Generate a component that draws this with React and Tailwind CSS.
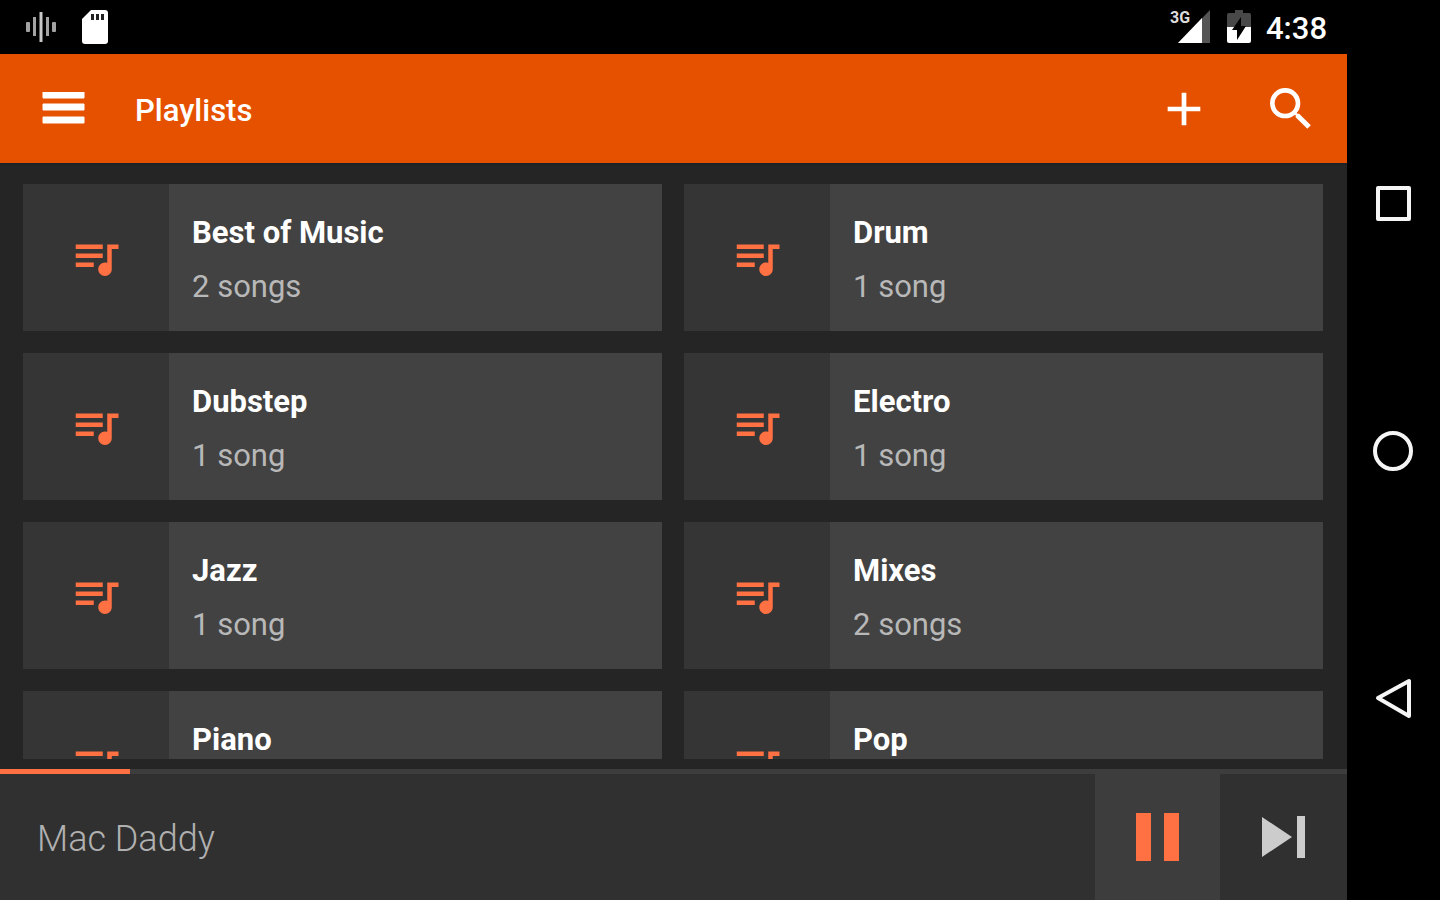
import { useState } from 'react';
import { MdAdd, MdQueueMusic, MdSearch } from 'react-icons/md';

const playlists = [
  { name: 'Best of Music', songs: 2 },
  { name: 'Drum', songs: 1 },
  { name: 'Dubstep', songs: 1 },
  { name: 'Electro', songs: 1 },
  { name: 'Jazz', songs: 1 },
  { name: 'Mixes', songs: 2 },
  { name: 'Piano', songs: 1 },
  { name: 'Pop', songs: 1 },
];

function StatusBar() {
  return (
    <div className="flex h-[54px] shrink-0 items-center bg-black pl-[26px] pr-5 text-white">
      <svg width="30" height="32" viewBox="0 0 30 32" aria-hidden="true">
        <g fill="#a3a3a3">
          <rect x="0" y="11" width="4" height="10" rx="1"/>
          <rect x="7" y="6" width="3" height="19"/>
          <rect x="20" y="6" width="3" height="19"/>
          <rect x="26" y="11" width="4" height="10" rx="1"/>
        </g>
        <rect x="13.500" y="1" width="3" height="30" fill="#c8c8c8"/>
      </svg>
      <svg className="ml-[26px]" width="26" height="34" viewBox="0 0 26 34" aria-hidden="true">
        <path d="M9 0h14a3 3 0 0 1 3 3v28a3 3 0 0 1-3 3H3a3 3 0 0 1-3-3V9z" fill="#fff"/>
        <path d="M9 4h3v6H9zM14 4h3v6h-3zM19 4h3v6h-3z" fill="#222"/>
      </svg>
      <div className="ml-auto flex items-center">
        <div className="relative" aria-label="3G signal">
          <svg className="ml-2" width="32" height="34" viewBox="8 0 32 34" aria-hidden="true">
            <path d="M40 0v33H8z" fill="#555"/>
            <path d="M32 8v25H8z" fill="#fff"/>
          </svg>
          <span className="absolute top-0 left-0 text-base leading-4 font-bold text-[#dddddd]">3G</span>
        </div>
        <svg className="ml-[17px]" width="24" height="34" viewBox="0 0 24 34" aria-label="Battery charging">
          <path d="M8 0h8v3h6a2 2 0 0 1 2 2v12H0V5a2 2 0 0 1 2-2h6z" fill="#484848"/>
          <path d="M0 17h24v14a2 2 0 0 1-2 2H2a2 2 0 0 1-2-2z" fill="#fff"/>
          <path d="M14 7v9h5l-9 14v-10H5z" fill="#000"/>
        </svg>
        <time className="ml-[15px] pt-1 text-[31px] leading-[50px] font-medium">4:38</time>
      </div>
    </div>
  );
}

function Toolbar() {
  return (
    <header className="flex h-[109px] shrink-0 items-center bg-[#e65100] pl-[42px] pr-[3px] text-white">
      <button type="button" aria-label="Menu">
        <svg width="43" height="34" viewBox="0 0 43 34">
          <path d="M1 0h41v6H1zM1 12h41v6H1zM1 25h41v6H1z" fill="currentColor" stroke="currentColor" strokeWidth="1" strokeLinejoin="round"/>
        </svg>
      </button>
      <h1 className="ml-[50px] flex-1 pt-1 text-[31px] leading-10 font-medium">Playlists</h1>
      <button type="button" aria-label="Add playlist" className="flex w-[107px] justify-center">
        <MdAdd className="size-14"/>
      </button>
      <button type="button" aria-label="Search" className="flex w-[107px] justify-center">
        <MdSearch className="size-14"/>
      </button>
    </header>
  );
}

function PlaylistCard({ name, songs }) {
  return (
    <a href="#" className="flex h-[147px] bg-[#424242]">
      <span className="flex w-[146px] shrink-0 items-center justify-center bg-[#353535] text-[#ff7043]">
        <MdQueueMusic className="size-[54px]"/>
      </span>
      <span className="flex flex-col justify-center pl-[23px] pt-1 text-[31px] leading-[54px]">
        <span className="font-bold text-white">{name}</span>
        <span className="text-[#b8b8b8]">{songs} {songs === 1 ? 'song' : 'songs'}</span>
      </span>
    </a>
  );
}

function Player({ title, progress }) {
  const [playing, setPlaying] = useState(true);

  return (
    <footer className="shrink-0 bg-[#303030]">
      <div className="h-[5px] bg-[#3d3d3d]">
        <div className="h-full bg-[#ff7043]" style={{ width: `${progress}%` }}/>
      </div>
      <div className="flex h-[126px] items-stretch">
        <p className="flex flex-1 items-center pl-[37px] pt-1 text-[36px] font-light text-[#b0b0b0]">{title}</p>
        <button type="button" aria-label={playing ? 'Pause' : 'Play'} onClick={() => setPlaying(!playing)}
          className="flex w-[125px] items-center justify-center bg-[#3d3d3d] text-[#ff7043]">
          <svg width="44" height="48" viewBox="0 0 44 48" fill="currentColor">
            {playing ? <path d="M0 0h15v48H0zM28 0h15v48H28z"/> : <path d="M4 0l38 24L4 48z"/>}
          </svg>
        </button>
        <button type="button" aria-label="Next" className="flex w-[127px] items-center justify-center text-[#cccccc]">
          <svg width="43" height="42" viewBox="0 0 43 42" fill="currentColor">
            <path d="M0 1l30 20L0 41zM35 0h8v42h-8z"/>
          </svg>
        </button>
      </div>
    </footer>
  );
}

function NavButton({ label, children }) {
  return (
    <button type="button" aria-label={label} className="flex flex-1 items-center justify-center">
      <svg width="42" height="42" viewBox="0 0 42 42" fill="none" stroke="#f5f5f5" strokeWidth="4" strokeLinejoin="round">
        {children}
      </svg>
    </button>
  );
}

export default function App() {
  return (
    <div className="flex h-screen bg-black font-['Roboto',sans-serif]">
      <div className="flex min-w-0 flex-1 flex-col bg-[#252525]">
        <StatusBar/>
        <Toolbar/>
        <main className="mb-[10px] min-h-0 flex-1 overflow-hidden border-t-2 border-[#1c2225] pt-[19px] pr-6 pl-[23px]">
          <div className="grid grid-cols-2 gap-[22px]">
            {playlists.map(p => <PlaylistCard key={p.name} {...p}/>)}
          </div>
        </main>
        <Player title="Mac Daddy" progress={9.65}/>
      </div>
      <nav className="flex w-[93px] shrink-0 flex-col py-[78px]">
        <NavButton label="Recent apps"><rect x="5" y="7" width="31" height="31"/></NavButton>
        <NavButton label="Home"><circle cx="20" cy="22" r="18"/></NavButton>
        <NavButton label="Back"><path d="M5 21L36 4v35z"/></NavButton>
      </nav>
    </div>
  );
}
